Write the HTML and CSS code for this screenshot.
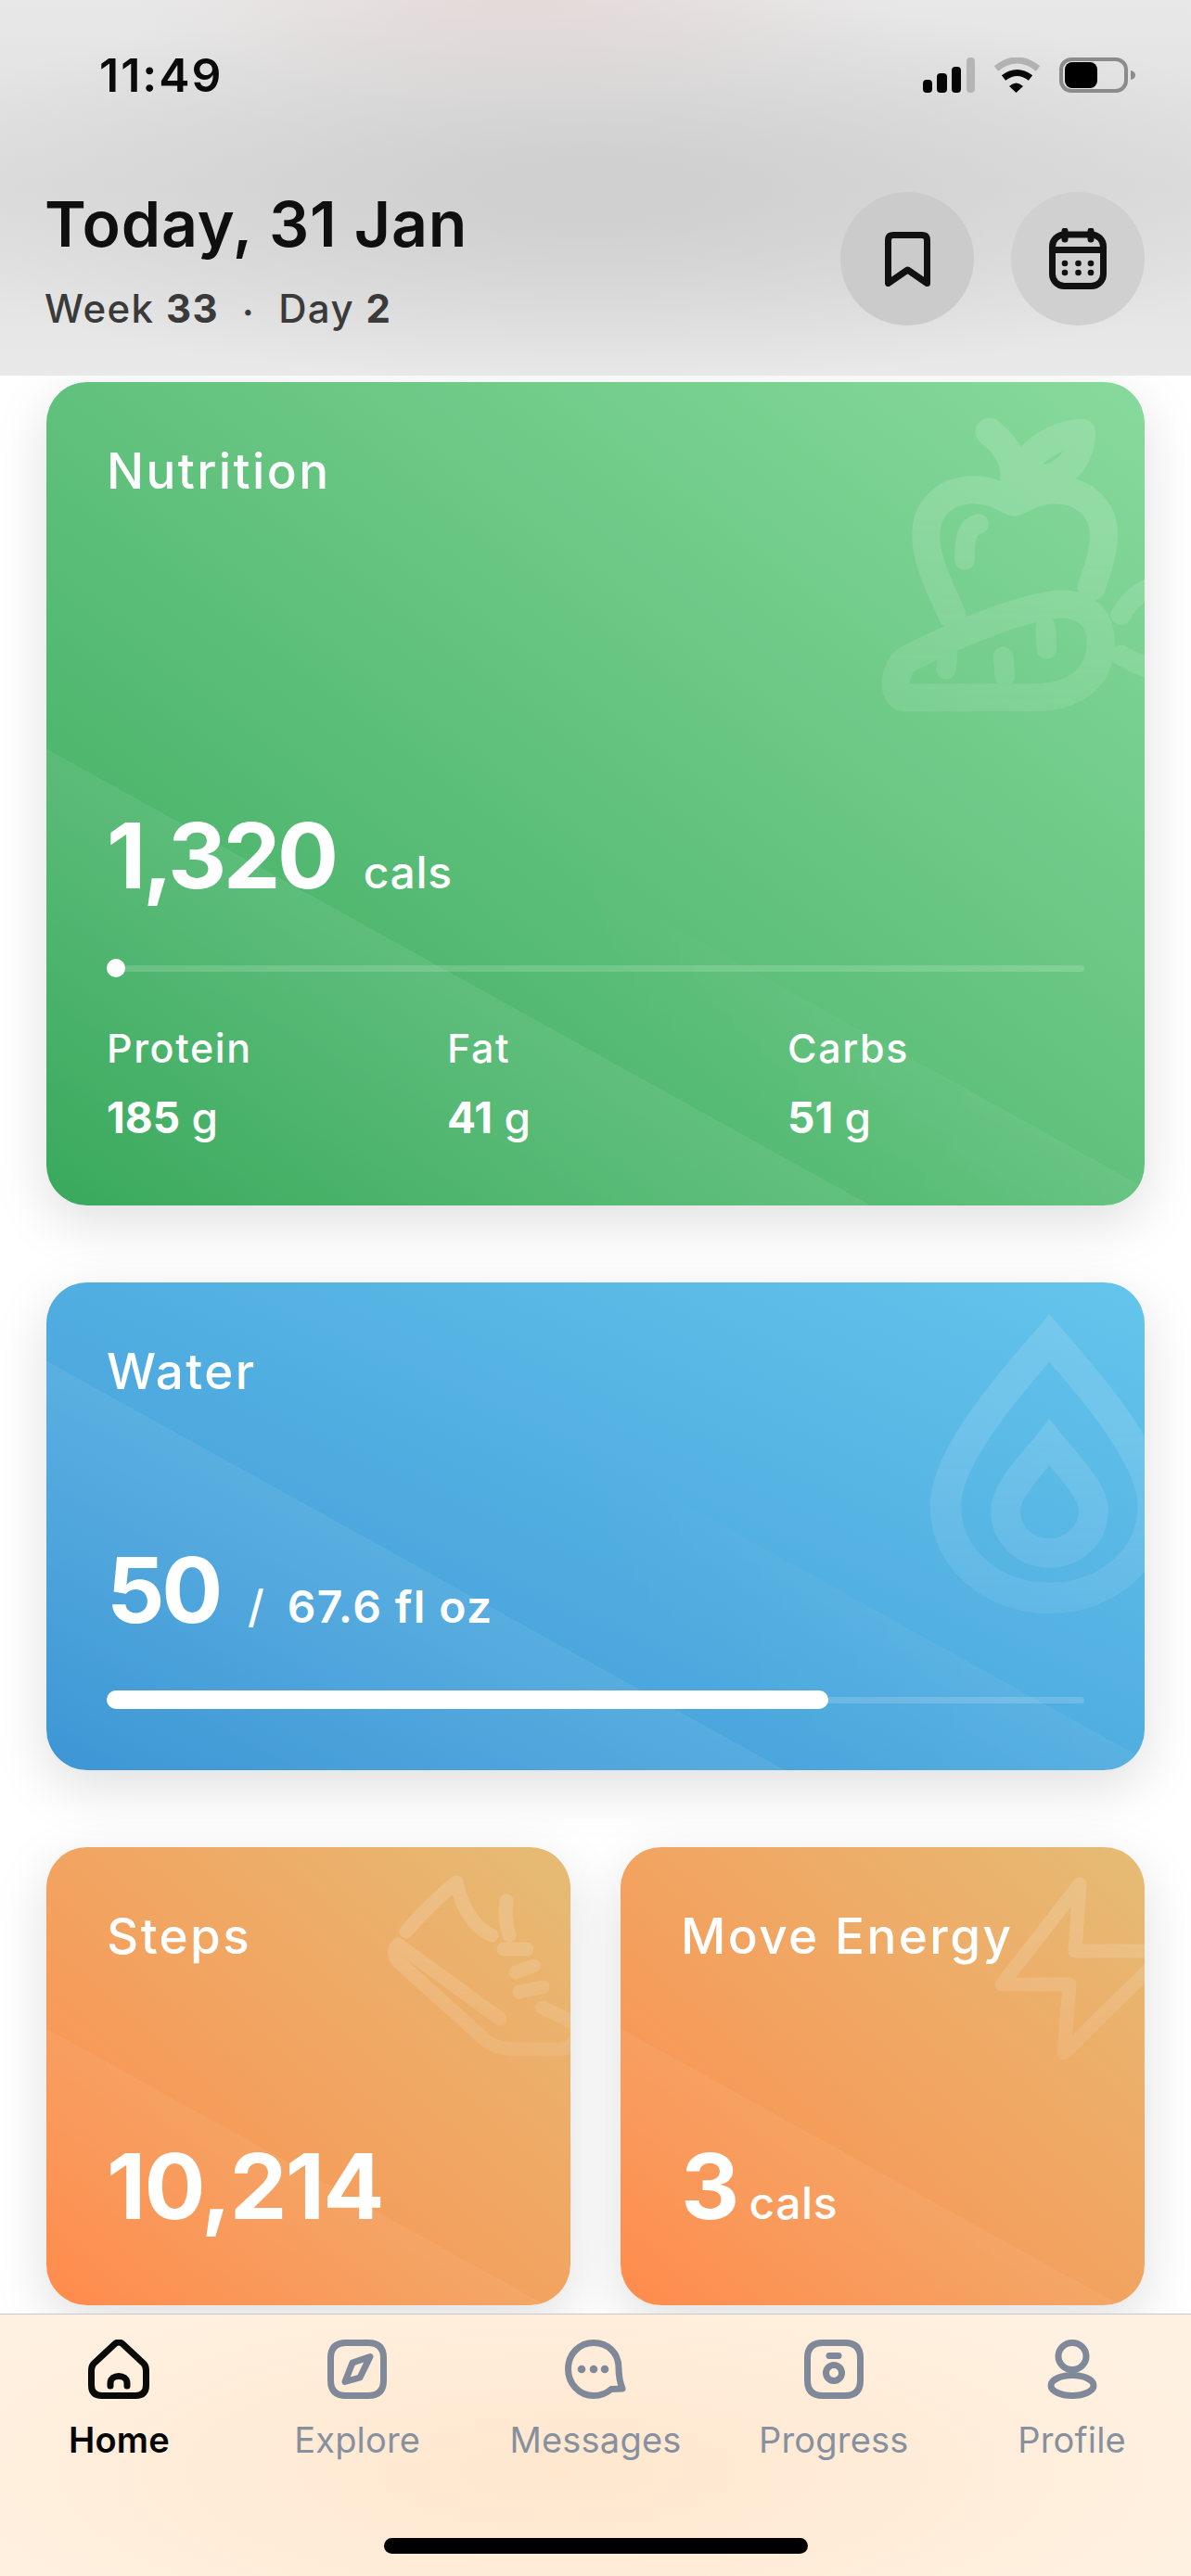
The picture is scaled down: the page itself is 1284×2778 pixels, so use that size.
FILE: index.html
```html
<!DOCTYPE html>
<html lang="en">
<head>
<meta charset="utf-8">
<title>Today</title>
<link rel="stylesheet" href="styles.css">
</head>
<body>
<div class="app">
  <header class="top">
    <div class="status">
      <span class="time">11:49</span>
      <div class="status-icons">
        <svg class="sig" viewBox="0 0 56 38"><rect x="0" y="24" width="10" height="14" rx="4"/><rect x="15" y="17" width="11" height="21" rx="4"/><rect x="31" y="10" width="10" height="28" rx="4"/><rect class="off" x="47" y="0" width="9" height="38" rx="4"/></svg>
        <svg class="wifi" viewBox="0 0 53 38"><path class="wifi-off" d="M4 12Q26.500 -6 49 12"/><path class="wifi-on" d="M12 22Q26.500 11 41 22"/><path d="M18 31Q25.500 24 33 31L25.500 38Z"/></svg>
        <svg class="batt" viewBox="0 0 83 38"><rect class="batt-box" x="2" y="2" width="70" height="34" rx="11"/><rect x="6" y="5" width="35" height="28" rx="8"/><path class="batt-nub" d="M77 14Q82 15 82 19Q82 23 77 24Z"/></svg>
      </div>
    </div>
    <div class="headline">
      <div class="head-text">
        <h1 class="title">Today, 31 Jan</h1>
        <p class="sub">Week <b>33</b><i class="dot">•</i>Day <b>2</b></p>
      </div>
      <div class="actions">
        <button class="round round-dark">
          <svg class="i-book" viewBox="0 0 49 59"><path d="M3.500 55.500V9Q3.500 3.500 9 3.500H40Q45.500 3.500 45.500 9V55.500L24.500 41Z"/></svg>
        </button>
        <button class="round">
          <svg class="i-cal" viewBox="0 0 62 66"><rect x="3.500" y="7" width="55" height="55.500" rx="13"/><path d="M3.500 23.500H58.500"/><path d="M17 3V12M45 3V12"/><g class="cal-dots"><circle cx="17" cy="38" r="3.300"/><circle cx="31.500" cy="38" r="3.300"/><circle cx="45" cy="38" r="3.300"/><circle cx="17" cy="48" r="3.300"/><circle cx="31.500" cy="48" r="3.300"/><circle cx="45" cy="48" r="3.300"/></g></svg>
        </button>
      </div>
    </div>
  </header>

  <main class="feed">
    <section class="card green">
      <svg class="deco deco-apple" viewBox="0 36 1062 1200">
        <g class="w90">
          <path d="M440 790C400 700 355 620 355 530C355 440 420 385 510 385C570 385 600 410 640 425C680 410 710 385 770 385C860 385 930 440 930 530C930 590 910 640 890 700"/>
          <path d="M560 197C600 230 640 270 640 340V425"/>
          <path d="M660 330C690 260 770 205 858 200C858 270 820 330 740 350Z"/>
          <path d="M290 1057H700C840 1057 920 990 920 880C920 790 860 750 780 755C650 770 480 840 300 930C250 955 240 1057 290 1057Z"/>
        </g>
        <g class="w65">
          <path d="M525 495C490 505 480 530 480 610"/>
          <path d="M425 900L420 965M742 830L745 900M605 925L610 985"/>
          <path d="M985 790C1010 740 1050 710 1110 690M985 920C1020 940 1060 960 1110 975"/>
        </g>
      </svg>
      <h2 class="label">Nutrition</h2>
      <div class="big-row big-nutrition"><span class="big">1,320</span><span class="unit unit-gap">cals</span></div>
      <div class="bar"><span class="knob"></span></div>
      <div class="macros">
        <div><div class="m-name">Protein</div><div class="m-val"><b>185</b> g</div></div>
        <div><div class="m-name">Fat</div><div class="m-val"><b>41</b> g</div></div>
        <div><div class="m-name">Carbs</div><div class="m-val"><b>51</b> g</div></div>
      </div>
    </section>

    <section class="card blue">
      <svg class="deco deco-drop" viewBox="0 8 825 1140">
        <path class="d1" d="M517 188C430 290 181 560 181 730C181 900 330 1029 517 1029C704 1029 853 900 853 730C853 560 604 290 517 188Z"/>
        <path class="d2" d="M517 526C470 585 375 680 375 745C375 825 440 884 517 884C594 884 660 825 660 745C660 680 564 585 517 526Z"/>
      </svg>
      <h2 class="label">Water</h2>
      <div class="big-row big-water"><span class="big">50</span><span class="slash">/</span><span class="unit unit-strong">67.6 fl oz</span></div>
      <div class="bar bar-water"><span class="fill"></span></div>
    </section>

    <div class="pair">
      <section class="card orange">
        <svg class="deco deco-shoe" viewBox="340 0 225 240">
          <path d="M388 91C405 70 425 52 442 38C447 60 458 85 480 95"/>
          <path d="M496 58Q493 78 499 95M493 110H518M506 135L525 128M510 156L535 151"/>
          <path d="M379 105L489 185M379 105Q372 114 380 124L470 205C480 215 490 218 510 218H550C575 218 580 195 560 185L535 173"/>
        </svg>
        <h2 class="label">Steps</h2>
        <div class="big-row big-small"><span class="big">10,214</span></div>
      </section>
      <section class="card orange">
        <svg class="deco deco-bolt" viewBox="340 0 225 240">
          <path d="M495 40L490 112H590L478 222L484 148H411Z"/>
        </svg>
        <h2 class="label">Move Energy</h2>
        <div class="big-row big-small"><span class="big">3</span><span class="unit unit-near">cals</span></div>
      </section>
    </div>
  </main>

  <nav class="tabs">
    <div class="tab-row">
      <a class="tab on">
        <svg class="ico" viewBox="0 0 66 64"><path d="M29 4.500L6 26Q3.500 29 3.500 33V49Q3.500 60.500 15 60.500H51Q62.500 60.500 62.500 49V33Q62.500 29 60 26L37 4.500Q33 1.500 29 4.500Z"/><path d="M24 50V47C24 37 42 37 42 47V50"/></svg>
        <span>Home</span>
      </a>
      <a class="tab">
        <svg class="ico" viewBox="0 0 64 64"><path d="M20 3.500H44C55 3.500 60.500 9 60.500 20V44C60.500 55 55 60.500 44 60.500H20C9 60.500 3.500 55 3.500 44V20C3.500 9 9 3.500 20 3.500Z"/><path d="M46 18.500L35 41L19 45.500L27 25Z"/></svg>
        <span>Explore</span>
      </a>
      <a class="tab">
        <svg class="ico" viewBox="0 0 66 64"><path d="M31 3.500C47 3.500 58 15 58 31C58 38 58.500 44 62 53L50 53.500C45 58 38 60.500 31 60.500C15 60.500 3.500 47 3.500 32C3.500 16 15 3.500 31 3.500Z"/><g class="msg-dots"><circle cx="18" cy="32" r="4.300"/><circle cx="31" cy="32" r="4.300"/><circle cx="43" cy="32" r="4.300"/></g></svg>
        <span>Messages</span>
      </a>
      <a class="tab">
        <svg class="ico" viewBox="0 0 64 64"><path d="M20 3.500H44C55 3.500 60.500 9 60.500 20V44C60.500 55 55 60.500 44 60.500H20C9 60.500 3.500 55 3.500 44V20C3.500 9 9 3.500 20 3.500Z"/><circle cx="32" cy="36" r="8.500"/><path d="M27 17.500H37"/></svg>
        <span>Progress</span>
      </a>
      <a class="tab">
        <svg class="ico ico-narrow" viewBox="0 0 54 64"><ellipse cx="27" cy="18" rx="15" ry="14.500"/><ellipse cx="27" cy="49.500" rx="23" ry="11"/></svg>
        <span>Profile</span>
      </a>
    </div>
    <div class="home-bar"></div>
  </nav>
</div>
</body>
</html>
```
FILE: styles.css
```css
* { box-sizing: border-box; }
html, body { margin: 0; padding: 0; }
body { width: 1284px; height: 2778px; overflow: hidden; background: #fff; font-family: Inter, "Noto Sans", sans-serif; }
.app { display: flex; flex-direction: column; height: 2778px; }

/* header */
.top {
  position: relative; z-index: 2; height: 405px; flex: none; padding: 62px 50px 0;
  background:
    radial-gradient(ellipse 420px 130px at 560px 0, rgba(226,208,208,.6), rgba(226,208,208,0)),
    radial-gradient(ellipse 800px 210px at 640px 205px, #d0d0d0 15%, rgba(208,208,208,0)),
    linear-gradient(180deg, #e8e8e8, #dedede 50%, #e9e9e9);
}
.status { display: flex; justify-content: space-between; align-items: flex-start; height: 38px; padding-left: 57px; }
.time { font-size: 50px; font-weight: 600; line-height: 38px; color: #0a0a0a; letter-spacing: 2px; }
.status-icons { display: flex; gap: 19px; margin-right: 9px; }
.sig { width: 56px; height: 38px; fill: #050505; }
.sig .off { fill: #b5b5b5; }
.wifi { width: 53px; height: 38px; fill: #050505; }
.wifi-off, .wifi-on { fill: none; stroke-width: 7; }
.wifi-off { stroke: #b2b2b2; }
.wifi-on { stroke: #050505; }
.batt { width: 83px; height: 38px; fill: #000; }
.batt-box { fill: none; stroke: #8b8b8b; stroke-width: 4; }
.batt-nub { fill: #8b8b8b; }

.headline { display: flex; justify-content: space-between; align-items: flex-start; margin-top: 107px; }
.head-text { margin-left: -2px; }
.title { margin: -2px 0 0; font-size: 68px; line-height: 72px; font-weight: 600; color: #0f0f0f; letter-spacing: .85px; }
.sub { margin: 31px 0 0; font-size: 42px; line-height: 50px; font-weight: 500; color: #3a3a3a; letter-spacing: 1.4px; }
.sub b { font-weight: 700; }
.dot { font-style: normal; font-size: 20px; margin: 0 26px; vertical-align: 5px; }
.actions { display: flex; gap: 40px; }
.round { width: 144px; height: 144px; border: 0; padding: 0; border-radius: 50%; background: #d0d0d0; display: flex; align-items: center; justify-content: center; }
.round-dark { background: #cbcbcb; }
.i-book { width: 49px; height: 59px; fill: none; stroke: #111; stroke-width: 7; stroke-linejoin: round; }
.i-cal { width: 62px; height: 66px; fill: none; stroke: #111; stroke-width: 7; stroke-linecap: round; }
.cal-dots { fill: #111; stroke: none; }

/* feed */
.feed { flex: 1; overflow: hidden; padding: 7px 50px 0; display: flex; flex-direction: column; gap: 83px; min-height: 0; }
.card { position: relative; flex: none; overflow: hidden; border-radius: 44px; color: #fff; padding: 0 65px; box-shadow: 0 18px 60px rgba(0,0,0,.13); display: flex; flex-direction: column; }
.card > *:not(.deco) { position: relative; }
.green {
  height: 888px;
  background:
    linear-gradient(209deg, rgba(255,255,255,0) 920px, rgba(255,255,255,.07) 920px, rgba(255,255,255,0) 1330px),
    linear-gradient(to top right, #39a95d, #88da9c);
}
.green::before, .blue::before {
  content: ""; position: absolute; inset: 0;
  -webkit-mask-image: linear-gradient(to right, transparent 45%, #000 85%);
  mask-image: linear-gradient(to right, transparent 45%, #000 85%);
}
.green::before { background: linear-gradient(209deg, rgba(255,255,255,0) 760px, rgba(255,255,255,.05) 760px, rgba(255,255,255,0) 915px); }
.blue {
  height: 526px;
  background:
    linear-gradient(209deg, rgba(255,255,255,0) 648px, rgba(255,255,255,.07) 648px, rgba(255,255,255,0) 1030px),
    linear-gradient(to top right, #3d96d5, #65c5ec);
}
.blue::before { background: linear-gradient(209deg, rgba(255,255,255,0) 450px, rgba(255,255,255,.05) 450px, rgba(255,255,255,0) 645px); }
.orange {
  background:
    linear-gradient(209deg, rgba(255,255,255,0) 445px, rgba(255,255,255,.05) 445px, rgba(255,255,255,0) 700px),
    linear-gradient(to top right, #ff8b4c, #e5bc75);
}
.pair { flex: none; display: grid; grid-template-columns: 565px 565px; gap: 54px; }
.pair .card { height: 494px; }

.label { margin: 66px 0 0; font-size: 53px; line-height: 60px; font-weight: 500; letter-spacing: 2.4px; }
.big-row { display: flex; align-items: baseline; }
.big { font-size: 98px; line-height: 110px; font-weight: 700; letter-spacing: -3.4px; }
.big-small .big { letter-spacing: -1.8px; }
.unit { font-size: 48px; font-weight: 500; letter-spacing: .6px; }
.unit-gap { margin-left: 30px; }
.unit-strong { font-weight: 600; letter-spacing: 1.4px; }
.unit-near { margin-left: 12px; }
.slash { font-size: 48px; font-weight: 500; margin: 0 25px 0 30px; }
.big-nutrition { margin-top: 330px; }
.big-water { margin-top: 151px; }
.big-small { margin-top: 185px; }

.bar { position: relative; height: 7px; margin-top: 63px; background: rgba(255,255,255,.16); border-radius: 4px; }
.knob { position: absolute; left: 0; top: -7px; width: 20px; height: 20px; border-radius: 50%; background: #fff; }
.fill { position: absolute; left: 0; top: -7px; width: 778px; height: 20px; border-radius: 10px; background: #fff; }
.bar-water { margin-top: 60px; }

.macros { display: grid; grid-template-columns: repeat(3, 367px); margin-top: 57px; }
.m-name { font-size: 43px; line-height: 50px; font-weight: 500; letter-spacing: 1.6px; }
.m-val { margin-top: 22px; font-size: 46px; line-height: 56px; font-weight: 500; }
.m-val b { font-weight: 700; }

/* watermark icons */
.deco {
  position: absolute; right: 0; top: 0; fill: none; stroke: #fff; opacity: .14; stroke-linecap: round; stroke-linejoin: round;
  -webkit-mask-image: linear-gradient(to bottom, #000 35%, rgba(0,0,0,.55));
  mask-image: linear-gradient(to bottom, #000 35%, rgba(0,0,0,.55));
}
.deco-apple { width: 354px; height: 400px; }
.w90 { stroke-width: 90; }
.w65 { stroke-width: 65; }
.deco-drop { width: 275px; height: 380px; opacity: .12; stroke-linejoin: miter; stroke-linecap: butt; }
.d1 { stroke-width: 100; }
.d2 { stroke-width: 95; }
.deco-shoe, .deco-bolt { width: 225px; height: 240px; stroke-width: 15; opacity: .15; }

/* tabs */
.tabs {
  flex: none; height: 283px; border-top: 1px solid #c8c8c8; display: flex; flex-direction: column; align-items: center; position: relative; z-index: 2;
  background:
    radial-gradient(ellipse 720px 230px at 600px 170px, #ffe7ce, rgba(255,231,206,0)),
    #fff1e1;
}
.tab-row { display: grid; grid-template-columns: repeat(5, 1fr); width: 100%; padding-top: 27px; }
.tab { display: flex; flex-direction: column; align-items: center; color: #87909f; }
.tab span { margin-top: 22px; font-size: 38px; line-height: 44px; font-weight: 400; letter-spacing: .2px; }
.ico { width: 66px; height: 64px; fill: none; stroke: #7f8999; stroke-width: 7; stroke-linejoin: round; stroke-linecap: round; }
.ico-narrow { width: 54px; }
.msg-dots circle { fill: #7f8999; stroke: none; }
.tab.on { color: #050505; }
.tab.on span { font-weight: 600; }
.tab.on .ico { stroke: #0a0a0a; }
.home-bar { margin-top: 84px; width: 457px; height: 17px; border-radius: 9px; background: #000; }
```
